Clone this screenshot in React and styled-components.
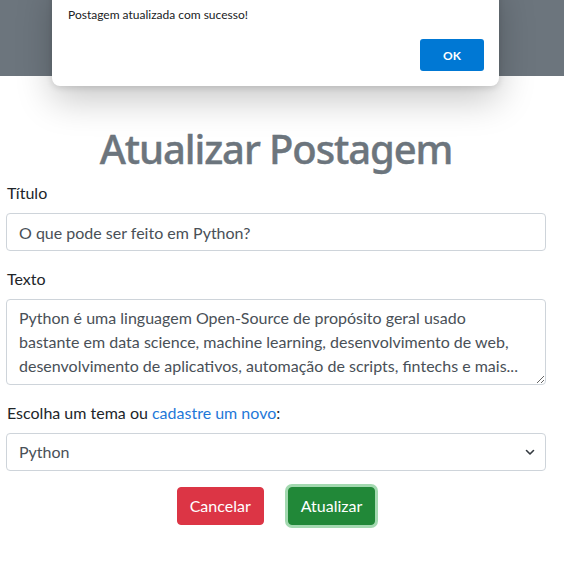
import styled, { createGlobalStyle } from 'styled-components';

const Global = createGlobalStyle`
    * { box-sizing: border-box; }
    body {
        margin: 0;
        background: #fff;
        font-family: Lato, "Noto Sans", sans-serif;
        color: #212529;
        font-size: 16px;
        line-height: 1.5;
    }
`;

export default function App() {
    const texto = "Python é uma linguagem Open-Source de propósito geral usado\nbastante em data science, machine learning, desenvolvimento de web,\ndesenvolvimento de aplicativos, automação de scripts, fintechs e mais...";

    return (
        <Page>
            <Global />
            <Header />
            <Container>
                <Titulo>Atualizar Postagem</Titulo>
                <Grupo>
                    <Label>Título</Label>
                    <Input defaultValue="O que pode ser feito em Python?" />
                </Grupo>
                <Grupo>
                    <Label>Texto</Label>
                    <Area rows={3} defaultValue={texto} spellCheck={false} />
                </Grupo>
                <Grupo>
                    <Label>Escolha um tema ou <Link href="#">cadastre um novo</Link>:</Label>
                    <SelectWrap>
                        <Select defaultValue="python">
                            <option value="python">Python</option>
                        </Select>
                        <Seta width="10" height="8" viewBox="0 0 10 8">
                            <path d="M1.5 2.5 L5 6 L8.5 2.5" fill="none" stroke="#343a40" strokeWidth="1.6" strokeLinecap="round" strokeLinejoin="round" />
                        </Seta>
                    </SelectWrap>
                </Grupo>
                <Botoes>
                    <Botao cor="#dc3545">Cancelar</Botao>
                    <Botao cor="#218838" foco>Atualizar</Botao>
                </Botoes>
            </Container>
            <Alerta>
                <AlertaTexto>Postagem atualizada com sucesso!</AlertaTexto>
                <AlertaRodape>
                    <Ok>OK</Ok>
                </AlertaRodape>
            </Alerta>
        </Page>
    );
}

const Page = styled.div`
    position: relative;
    width: 564px;
    min-height: 568px;
`;

const Header = styled.div`
    height: 76px;
    background: #6c757d;
`;

const Container = styled.div`
    width: 540px;
    margin-left: 6px;
    padding-top: 49px;
`;

const Titulo = styled.h1`
    margin: 0 0 8px;
    font-family: "Noto Sans", sans-serif;
    font-size: 40px;
    font-weight: 500;
    letter-spacing: -1.1px;
    line-height: 48px;
    color: #6c757d;
    text-align: center;
    -webkit-text-stroke: 0.4px #6c757d;
`;

const Grupo = styled.div`
    display: flex;
    flex-direction: column;
    margin-bottom: 16px;
`;

const Label = styled.label`
    display: block;
    margin-bottom: 8px;
    font-size: 16px;
    line-height: 24px;
    padding-left: 1px;
`;

const Link = styled.a`
    color: #1f78d8;
    text-decoration: none;
`;

const campo = `
    width: 100%;
    border: 1px solid #ced4da;
    border-radius: 4px;
    padding: 6px 12px;
    font-family: inherit;
    font-size: 16px;
    line-height: 24px;
    color: #495057;
    background: #fff;
    outline: none;
`;

const Input = styled.input`
    ${campo}
    height: 38px;
`;

const Area = styled.textarea`
    ${campo}
    height: 86px;
    resize: vertical;
    overflow: hidden;
    white-space: pre-wrap;
`;

const SelectWrap = styled.div`
    position: relative;
`;

const Select = styled.select`
    ${campo}
    height: 38px;
    appearance: none;
    -webkit-appearance: none;
`;

const Seta = styled.svg`
    position: absolute;
    right: 11px;
    top: 15px;
    pointer-events: none;
`;

const Botoes = styled.div`
    display: flex;
    justify-content: center;
    gap: 24px;
`;

const Botao = styled.button`
    height: 38px;
    padding: 6px 12px;
    border: 1px solid ${props => props.cor};
    border-radius: 4px;
    background: ${props => props.cor};
    color: #fff;
    font-family: inherit;
    font-size: 16px;
    line-height: 24px;
    cursor: pointer;
    box-shadow: ${props => props.foco ? '0 0 0 3px rgba(72, 180, 97, 0.5)' : 'none'};
`;

const Alerta = styled.div`
    position: absolute;
    left: 52px;
    top: -20px;
    width: 447px;
    height: 106px;
    background: #fff;
    border-radius: 8px;
    box-shadow: 0 14px 36px rgba(0, 0, 0, 0.22), 0 2px 6px rgba(0, 0, 0, 0.12);
    padding: 27px 15px 15px 16px;
    display: flex;
    flex-direction: column;
    justify-content: space-between;
`;

const AlertaTexto = styled.div`
    font-size: 12px;
    line-height: 16px;
    color: #202124;
`;

const AlertaRodape = styled.div`
    display: flex;
    justify-content: flex-end;
`;

const Ok = styled.button`
    width: 64px;
    height: 32px;
    border: none;
    border-radius: 3px;
    background: #0078d4;
    color: #fff;
    font-family: inherit;
    font-size: 12px;
    font-weight: 700;
`;
